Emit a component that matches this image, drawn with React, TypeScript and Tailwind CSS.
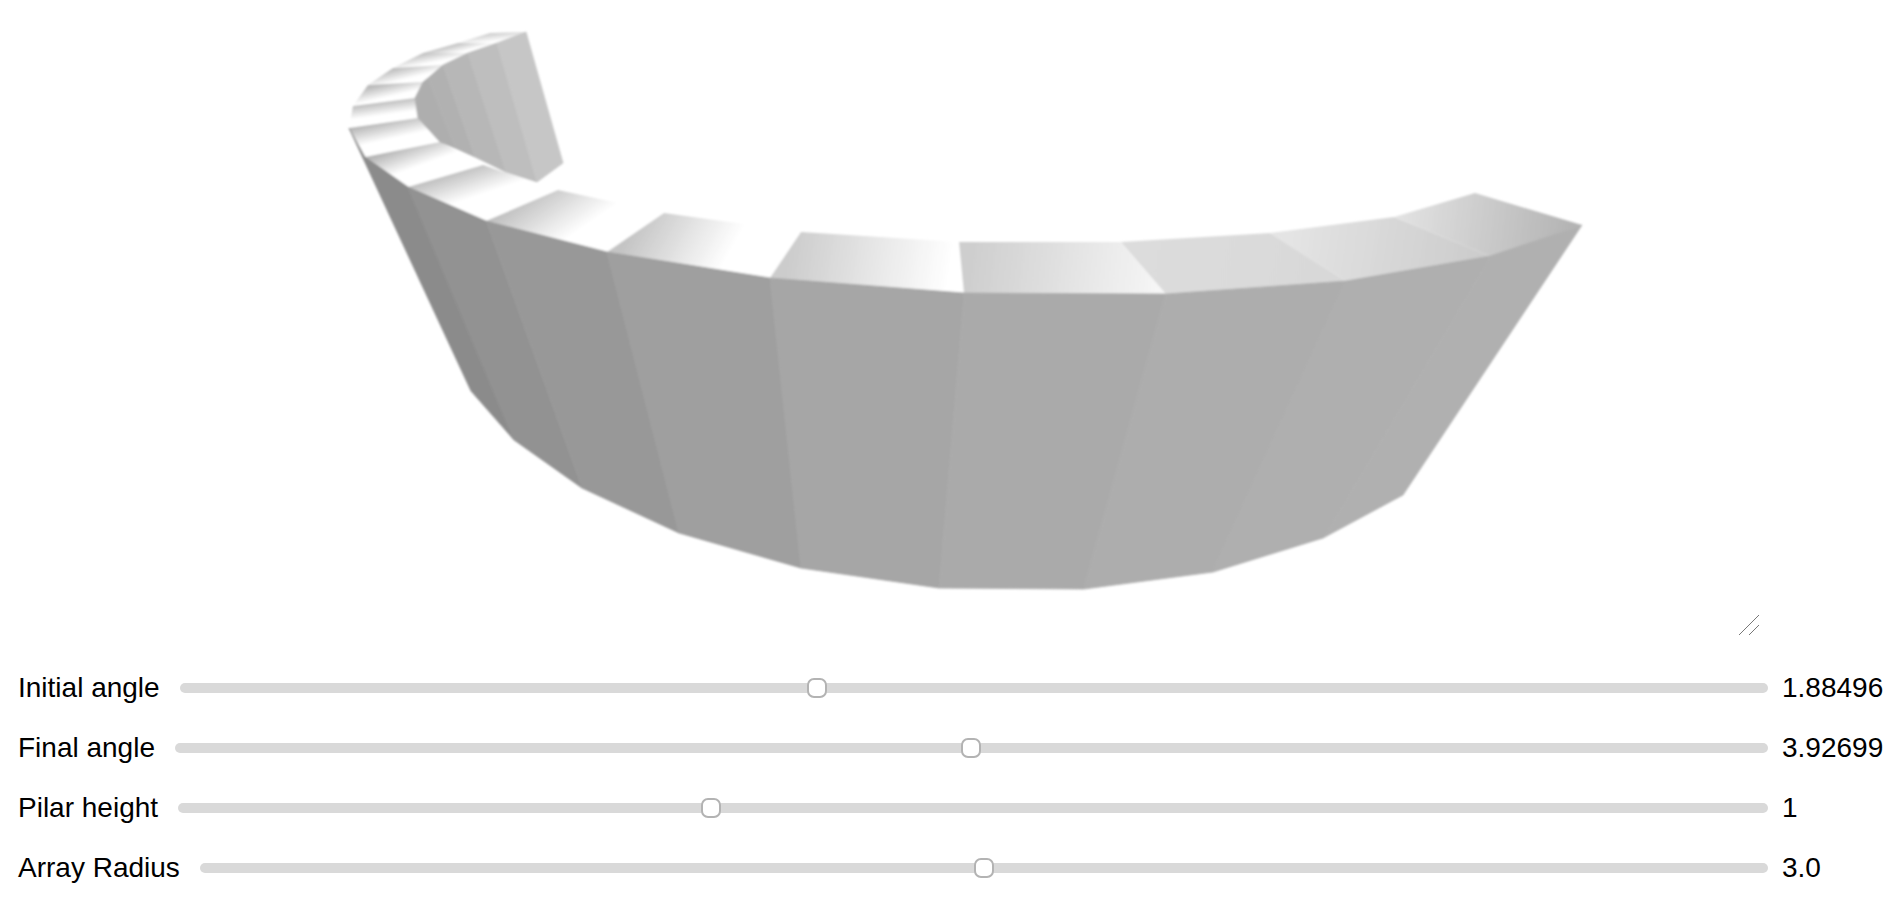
const OUTER: [number, number][] = [
  [490, 33], [458, 43], [423, 53], [393, 68], [368, 85], [353, 106], [349, 128], [365, 157], [408, 187],
  [486, 221], [607, 252], [770, 278], [964, 293], [1166, 294], [1346, 281], [1490, 256], [1582, 225],
];
const INNER: [number, number][] = [
  [526, 32], [497, 43], [468, 53], [443, 65], [423, 82], [415, 98], [418, 118], [440, 142], [483, 165],
  [558, 190], [664, 213], [801, 232], [959, 242], [1121, 242], [1270, 233], [1394, 217], [1475, 193],
];
const BOTTOM: [number, number][] = [
  [471, 391], [514, 440], [582, 488], [679, 533], [801, 568], [939, 588], [1084, 589], [1213, 572], [1323, 538], [1403, 495],
];
// outer wall faces, left to right
const WALLS: { from: number; to: number; fill: string }[] = [
  { from: 6, to: 8, fill: "#8b8b8b" },
  { from: 8, to: 9, fill: "#929292" },
  { from: 9, to: 10, fill: "#989898" },
  { from: 10, to: 11, fill: "#9f9f9f" },
  { from: 11, to: 12, fill: "#a6a6a6" },
  { from: 12, to: 13, fill: "#aaaaaa" },
  { from: 13, to: 14, fill: "#adadad" },
  { from: 14, to: 15, fill: "#afafaf" },
  { from: 15, to: 16, fill: "#b0b0b0" },
];
// gradient line and end shades for each top face
const TOP_SHADES: [number, number, number, number, string, string][] = [
  [505, 32, 506, 40, "#d0d0d0", "#ffffff"],
  [475, 40, 477, 48, "#c8c8c8", "#ffffff"],
  [444, 50, 446, 60, "#c4c4c4", "#ffffff"],
  [416, 64, 419, 76, "#c0c0c0", "#ffffff"],
  [394, 82, 397, 95, "#bcbcbc", "#ffffff"],
  [383, 101, 385, 115, "#bababa", "#ffffff"],
  [382, 122, 386, 140, "#b8b8b8", "#ffffff"],
  [400, 148, 408, 170, "#b8b8b8", "#ffffff"],
  [440, 175, 450, 205, "#bcbcbc", "#ffffff"],
  [535, 190, 568, 238, "#c0c0c0", "#ffffff"],
  [640, 215, 725, 262, "#c4c4c4", "#ffffff"],
  [790, 250, 950, 275, "#cccccc", "#ffffff"],
  [970, 260, 1160, 285, "#cecece", "#f6f6f6"],
  [1150, 240, 1340, 280, "#dcdcdc", "#d8d8d8"],
  [1290, 225, 1480, 255, "#e4e4e4", "#cccccc"],
  [1400, 215, 1570, 235, "#e2e2e2", "#b4b4b4"],
];
// inner wall faces at the far end of the arc
const BACK_WALLS: { pts: string; fill: string }[] = [
  { pts: "415,98 423,82 428,78 455,148 440,142 418,118", fill: "#aeaeae" },
  { pts: "428,78 443,65 475,157 455,148", fill: "#b1b1b1" },
  { pts: "443,65 468,53 506,172 475,157", fill: "#b7b7b7" },
  { pts: "468,53 497,43 537,182 506,172", fill: "#bebebe" },
  { pts: "497,43 526,32 563,163 537,182", fill: "#c6c6c6" },
];

const SLIDERS = [
  { label: "Initial angle", value: "1.88496", pos: 40.1 },
  { label: "Final angle", value: "3.92699", pos: 50 },
  { label: "Pilar height", value: "1", pos: 33.5 },
  { label: "Array Radius", value: "3.0", pos: 50 },
];

const pt = (p: [number, number]) => p.join(",");

function Arc() {
  return (
    <svg viewBox="0 0 1895 658" className="block h-[658px] w-full">
      <defs>
        <filter id="soft" x="-5%" y="-5%" width="110%" height="110%">
          <feGaussianBlur stdDeviation="0.9" />
        </filter>
        {TOP_SHADES.map(([x1, y1, x2, y2, a, b], i) => (
          <linearGradient key={i} id={`top${i}`} gradientUnits="userSpaceOnUse" x1={x1} y1={y1} x2={x2} y2={y2}>
            <stop offset="0" stopColor={a} />
            <stop offset="1" stopColor={b} />
          </linearGradient>
        ))}
      </defs>
      <g filter="url(#soft)">
        {TOP_SHADES.map((_, i) => (
          <polygon
            key={i}
            fill={`url(#top${i})`}
            points={`${pt(OUTER[i])} ${pt(INNER[i])} ${pt(INNER[i + 1])} ${pt(OUTER[i + 1])}`}
          />
        ))}
        {WALLS.map((w, i) => {
          const top = w.from === 6 ? `${pt(OUTER[6])} ${pt(OUTER[7])} ${pt(OUTER[8])}` : `${pt(OUTER[w.from])} ${pt(OUTER[w.to])}`;
          return <polygon key={i} fill={w.fill} stroke={w.fill} strokeWidth="0.8" strokeLinejoin="round" points={`${top} ${pt(BOTTOM[i + 1])} ${pt(BOTTOM[i])}`} />;
        })}
        {BACK_WALLS.map((w, i) => (
          <polygon key={i} fill={w.fill} stroke={w.fill} strokeWidth="0.8" strokeLinejoin="round" points={w.pts} />
        ))}
      </g>
    </svg>
  );
}

export default function App() {
  return (
    <div className="font-['Liberation_Sans',sans-serif] text-[28px] text-black">
      <div className="relative h-[658px]">
        <Arc />
        {/* resize grip */}
        <svg className="absolute left-[1738px] top-[614px] h-[22px] w-[22px]" viewBox="0 0 22 22" fill="none" stroke="#777" strokeWidth="1">
          <path d="M1 21L21 1M11 21L21 11" />
        </svg>
      </div>
      {SLIDERS.map((s) => (
        <div key={s.label} className="flex h-[60px] items-center pl-[18px] pr-[10px]">
          <span className="whitespace-nowrap">{s.label}</span>
          <div className="relative ml-[20px] h-[10px] flex-1 rounded-full bg-[#d9d9d9]">
            <div
              className="absolute top-1/2 h-[20px] w-[20px] -translate-x-1/2 -translate-y-1/2 rounded-[7px] border-2 border-[#b3b3b3] bg-white"
              style={{ left: `${s.pos}%` }}
            />
          </div>
          <span className="ml-[14px] w-[103px] whitespace-nowrap">{s.value}</span>
        </div>
      ))}
    </div>
  );
}
